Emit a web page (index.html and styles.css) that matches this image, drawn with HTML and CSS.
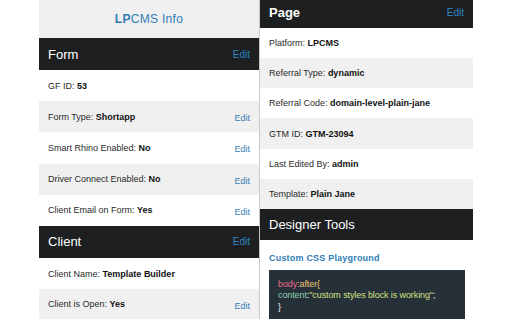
FILE: index.html
```html
<!DOCTYPE html>
<html>
<head>
<meta charset="utf-8">
<link rel="stylesheet" href="styles.css">
</head>
<body>
<div class="stage">
  <div class="panel left">
    <div class="info-title"><b>LP</b>CMS Info</div>
    <div class="sec-head"><span class="sec-name">Form</span><span class="head-edit">Edit</span></div>
    <div class="row white"><span>GF ID: <b>53</b></span></div>
    <div class="row gray"><span>Form Type: <b>Shortapp</b></span><span class="row-edit">Edit</span></div>
    <div class="row white"><span>Smart Rhino Enabled: <b>No</b></span><span class="row-edit">Edit</span></div>
    <div class="row gray"><span>Driver Connect Enabled: <b>No</b></span><span class="row-edit">Edit</span></div>
    <div class="row white"><span>Client Email on Form: <b>Yes</b></span><span class="row-edit">Edit</span></div>
    <div class="sec-head"><span class="sec-name">Client</span><span class="head-edit">Edit</span></div>
    <div class="row white"><span>Client Name: <b>Template Builder</b></span></div>
    <div class="row gray last"><span>Client is Open: <b>Yes</b></span><span class="row-edit">Edit</span></div>
  </div>
  <div class="panel right">
    <div class="sec-head r-head"><span class="sec-name bold">Page</span><span class="head-edit">Edit</span></div>
    <div class="row r-row white"><span>Platform: <b>LPCMS</b></span></div>
    <div class="row r-row gray"><span>Referral Type: <b>dynamic</b></span></div>
    <div class="row r-row white"><span>Referral Code: <b>domain-level-plain-jane</b></span></div>
    <div class="row r-row gray"><span>GTM ID: <b>GTM-23094</b></span></div>
    <div class="row r-row white"><span>Last Edited By: <b>admin</b></span></div>
    <div class="row r-row gray"><span>Template: <b>Plain Jane</b></span></div>
    <div class="sec-head r-head"><span class="sec-name">Designer Tools</span></div>
    <div class="tools">
      <div class="tools-title">Custom CSS Playground</div>
      <div class="code">
        <div><span class="c-sel">body</span><span class="c-pseudo">:after{</span></div>
        <div><span class="c-prop">content</span><span class="c-punc">:</span><span class="c-str">"custom styles block is working"</span><span class="c-punc">;</span></div>
        <div><span class="c-punc">}</span></div>
      </div>
    </div>
  </div>
</div>
</body>
</html>
```

FILE: styles.css
```css
html, body {
  margin: 0;
  padding: 0;
  background: #ffffff;
  width: 512px;
  height: 320px;
  overflow: hidden;
  font-family: "Liberation Sans", Arial, sans-serif;
}
.stage {
  display: flex;
  align-items: flex-start;
  padding-left: 39px;
}
.panel {
  display: flex;
  flex-direction: column;
}
.left {
  width: 220px;
  flex: none;
}
.right {
  width: 213px;
  flex: none;
  border-left: 1px solid #c9c9c9;
  margin-top: -3px;
  background: #ffffff;
}
.info-title {
  height: 38px;
  background: #efefef;
  color: #2f7db5;
  font-size: 12px;
  letter-spacing: 0.3px;
  display: flex;
  align-items: center;
  justify-content: center;
}
.sec-head {
  height: 32px;
  background: #1d1f21;
  color: #ffffff;
  display: flex;
  align-items: center;
  justify-content: space-between;
  padding: 0 9px;
  box-sizing: border-box;
}
.r-head {
  height: 31px;
}
.sec-name {
  font-size: 13px;
}
.sec-name.bold {
  font-weight: bold;
}
.head-edit {
  font-size: 10px;
  color: #2f86c2;
}
.row {
  height: 31.2px;
  display: flex;
  align-items: center;
  justify-content: space-between;
  padding: 0 9px;
  box-sizing: border-box;
  font-size: 9px;
  color: #2a2a2a;
}
.row.last {
  height: 30px;
}
.r-row {
  height: 30.17px;
}
.row b {
  color: #111;
}
.white { background: #ffffff; }
.gray { background: #f0f0f0; }
.row-edit {
  color: #3580b8;
  font-size: 9px;
  margin-top: 3px;
}
.tools {
  padding: 13px 9px 0 9px;
  background: #ffffff;
}
.tools-title {
  color: #2f7db5;
  font-weight: bold;
  font-size: 9px;
  letter-spacing: 0.2px;
  line-height: 11px;
  margin-bottom: 6px;
}
.code {
  background: #263038;
  width: 196px;
  padding: 9px 9px 0 9px;
  box-sizing: border-box;
  font-size: 9px;
  line-height: 11.5px;
  color: #ffffff;
  height: 49px;
  letter-spacing: -0.1px;
}
.c-sel { color: #e86a86; }
.c-pseudo { color: #eec27a; }
.c-prop { color: #8ccfae; }
.c-str { color: #d2e282; }
.c-punc { color: #f0f0f0; }
```
